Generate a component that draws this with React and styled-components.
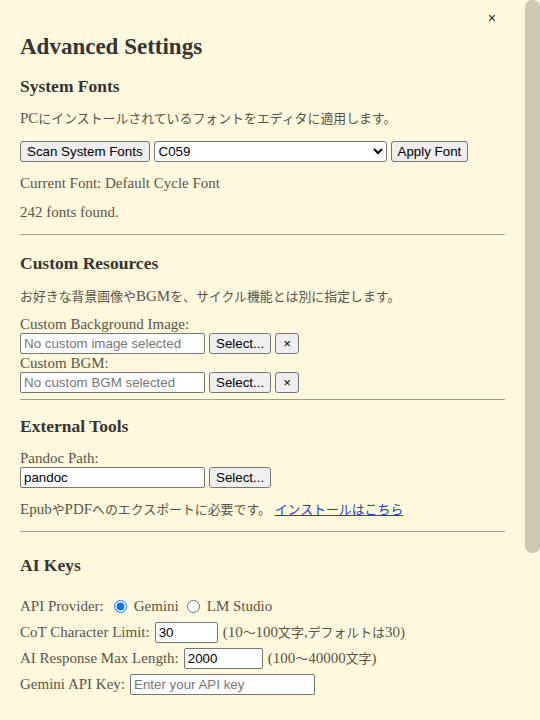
import React from 'react';
import styled, {createGlobalStyle} from 'styled-components';

const GlobalStyle = createGlobalStyle`
  html, body {
    margin: 0;
    padding: 0;
    background: #fef9dd;
  }
  body {
    font-family: "Liberation Serif", "Noto Sans CJK JP", serif;
  }
`;

const Frame = styled.div`
  display: flex;
  height: 100vh;
  overflow: hidden;
  background: #fef9dd;
`;

const Content = styled.div`
  position: relative;
  flex: 1;
  min-width: 0;
  overflow: hidden;
  padding: 0 20px;
  color: #5a5448;
  font-size: 15px;
`;

const ScrollTrack = styled.div`
  flex: none;
  width: 15px;
`;

const ScrollThumb = styled.div`
  height: ${p => p.$h}px;
  border-radius: 7px;
  background: #ccc8b2;
`;

const CloseButton = styled.button`
  position: absolute;
  top: 9px;
  right: 29px;
  padding: 0;
  border: none;
  background: transparent;
  color: #222;
  font: 14px/18px "Liberation Sans", sans-serif;
  cursor: pointer;
`;

const Title = styled.h2`
  margin: 33px 0 0;
  font-size: 23px;
  line-height: 28px;
  color: #363330;
`;

const SectionTitle = styled.h3`
  margin: ${p => p.$mt}px 0 0;
  font-size: 17.5px;
  line-height: 22px;
  color: #363330;
`;

const Text = styled.p`
  margin: ${p => p.$mt}px 0 0;
  line-height: 20px;
`;

// Japanese runs render smaller than the serif Latin text
const Ja = styled.span`
  font-size: 0.86em;
  line-height: 1;
`;

const Divider = styled.hr`
  margin: ${p => p.$mt}px 0 0;
  border: none;
  border-top: 1px solid #a19e96;
  height: 0;
`;

const Label = styled.label`
  display: block;
  margin-top: ${p => p.$mt || 0}px;
  line-height: 18px;
`;

const Row = styled.div`
  display: flex;
  align-items: center;
  gap: 4px;
  margin-top: ${p => p.$mt || 0}px;
  height: 21px;
`;

const Field = styled.div`
  display: flex;
  align-items: center;
  gap: 5px;
  height: 26px;
  margin-top: ${p => p.$mt || 0}px;
  white-space: nowrap;
`;

const controlFont = `
  font-family: "Liberation Sans", Arial, sans-serif;
  font-size: 13.333px;
`;

const Button = styled.button`
  ${controlFont}
  box-sizing: border-box;
  height: 21px;
  padding: 1px ${p => (p.$narrow ? 7 : 6)}px;
  border: 1px solid #767676;
  border-radius: 3px;
  background: #efefef;
  color: #000;
  cursor: pointer;
`;

const TextInput = styled.input`
  ${controlFont}
  box-sizing: border-box;
  width: ${p => p.$w}px;
  height: 21px;
  padding: 1px 3px;
  border: 1px solid #767676;
  border-radius: 2px;
  background: #fff;
  color: #000;
  &::placeholder {
    color: #777;
  }
`;

const FontSelect = styled.select`
  ${controlFont}
  box-sizing: border-box;
  width: 233px;
  height: 21px;
  border: 1px solid #767676;
  border-radius: 3px;
  background: #fff;
  color: #000;
`;

const RadioOption = styled.label`
  display: inline-flex;
  align-items: center;
`;

const Radio = styled.input`
  width: 13px;
  height: 13px;
  margin: 0 7px 0 ${p => p.$ml}px;
`;

const Link = styled.a`
  color: #2b3bcc;
  text-decoration: underline;
`;

const CJK = /([\u3000-\u30ff\u4e00-\u9fff\uff00-\uffef]+)/;

const jp = text =>
  text.split(CJK).map((part, i) =>
    CJK.test(part) ? <Ja key={i}>{part}</Ja> : part
  );

export default function App() {
  return (
    <>
      <GlobalStyle />
      <Frame>
        <Content>
          <CloseButton aria-label="close">×</CloseButton>
          <Title>Advanced Settings</Title>

          <SectionTitle $mt={14}>System Fonts</SectionTitle>
          <Text $mt={11}>{jp('PCにインストールされているフォントをエディタに適用します。')}</Text>
          <Row $mt={13}>
            <Button>Scan System Fonts</Button>
            <FontSelect defaultValue="C059">
              <option>C059</option>
              <option>DejaVu Serif</option>
              <option>Liberation Serif</option>
            </FontSelect>
            <Button>Apply Font</Button>
          </Row>
          <Text $mt={11}>Current Font: Default Cycle Font</Text>
          <Text $mt={9}>242 fonts found.</Text>
          <Divider $mt={12} />

          <SectionTitle $mt={17}>Custom Resources</SectionTitle>
          <Text $mt={12}>{jp('お好きな背景画像やBGMを、サイクル機能とは別に指定します。')}</Text>
          <Label $mt={9}>Custom Background Image:</Label>
          <Row>
            <TextInput $w={185} readOnly placeholder="No custom image selected" />
            <Button>Select...</Button>
            <Button $narrow>×</Button>
          </Row>
          <Label>Custom BGM:</Label>
          <Row>
            <TextInput $w={185} readOnly placeholder="No custom BGM selected" />
            <Button>Select...</Button>
            <Button $narrow>×</Button>
          </Row>
          <Divider $mt={6} />

          <SectionTitle $mt={15}>External Tools</SectionTitle>
          <Label $mt={12}>Pandoc Path:</Label>
          <Row>
            <TextInput $w={185} defaultValue="pandoc" />
            <Button>Select...</Button>
          </Row>
          <Text $mt={11}>
            {jp('EpubやPDFへのエクスポートに必要です。')}{' '}
            <Link href="#">{jp('インストールはこちら')}</Link>
          </Text>
          <Divider $mt={12} />

          <SectionTitle $mt={22}>AI Keys</SectionTitle>
          <Field $mt={17}>
            <span>API Provider:</span>
            <RadioOption>
              <Radio type="radio" name="provider" defaultChecked $ml={5} />
              Gemini
            </RadioOption>
            <RadioOption>
              <Radio type="radio" name="provider" $ml={3} />
              LM Studio
            </RadioOption>
          </Field>
          <Field>
            <span>CoT Character Limit:</span>
            <TextInput $w={63} defaultValue="30" />
            <span>{jp('(10〜100文字,デフォルトは30)')}</span>
          </Field>
          <Field>
            <span>AI Response Max Length:</span>
            <TextInput $w={79} defaultValue="2000" />
            <span>{jp('(100〜40000文字)')}</span>
          </Field>
          <Field>
            <span>Gemini API Key:</span>
            <TextInput $w={185} placeholder="Enter your API key" />
          </Field>
        </Content>
        <ScrollTrack>
          <ScrollThumb $h={553} />
        </ScrollTrack>
      </Frame>
    </>
  );
}
